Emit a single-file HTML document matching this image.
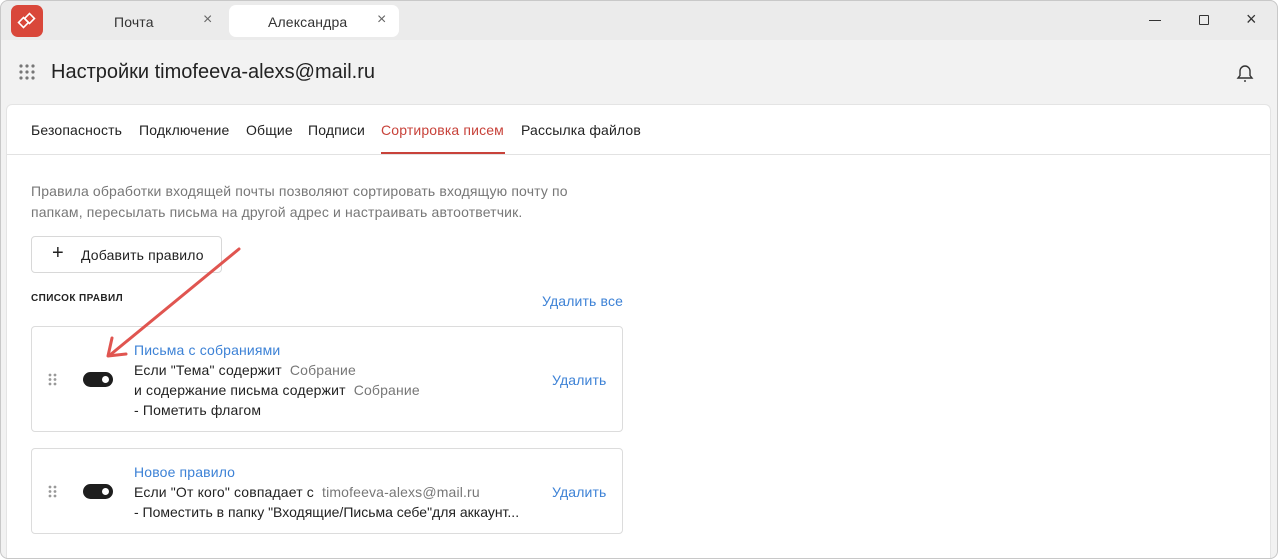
<!DOCTYPE html>
<html><head><meta charset="utf-8"><style>
*{margin:0;padding:0;box-sizing:border-box}
body{width:1278px;height:560px;background:#fff;font-family:"Liberation Sans","Noto Sans CJK SC",sans-serif;position:relative;overflow:hidden;color:#222}
.win{position:absolute;left:0;top:0;width:1278px;height:559px;border-radius:8px;background:#f2f2f2;overflow:hidden}
.frame{position:absolute;left:0;top:0;width:1278px;height:559px;border:1px solid #c8c8c8;border-radius:8px;pointer-events:none}
.tb{position:absolute;left:0;top:0;width:100%;height:40px;background:#ebebeb}
.abs{position:absolute}
.t{position:absolute;white-space:nowrap;letter-spacing:.15px}
.f{font-size:14px}
.panel{position:absolute;left:6px;top:104px;width:1265px;height:460px;background:#fff;border-radius:6px;border:1px solid #e4e4e4}
.card{position:absolute;left:31px;width:592px;border:1px solid #dcdcdc;border-radius:4px;background:#fff}
.tog{position:absolute;width:30px;height:15px;border-radius:8px;background:#1e1e1e}
.tog:after{content:"";position:absolute;right:4px;top:4px;width:7px;height:7px;border-radius:50%;background:#fff}
.blue{color:#3d82d6}
.gray{color:#777}
</style></head><body>
<div class="win">
<div class="tb"></div>
<div class="abs" style="left:11px;top:5px;width:32px;height:32px;border-radius:7px;background:#d9473a"></div>
<svg class="abs" style="left:17px;top:11px" width="20" height="20" viewBox="0 0 20 20" fill="none" stroke="#fff" stroke-width="1.6"><rect x="3" y="8" width="7" height="7" transform="rotate(-45 6.5 11.5)"/><rect x="9" y="4" width="7" height="7" transform="rotate(-45 12.5 7.5)"/></svg>
<div class="t" style="left:114px;top:14px;font-size:14px;color:#333">Почта</div>
<div class="t" style="left:203px;top:11px;font-size:16px;color:#666">×</div>
<div class="abs" style="left:229px;top:5px;width:170px;height:32px;background:#fff;border-radius:7px"></div>
<div class="t" style="left:268px;top:14px;font-size:14px;color:#333">Александра</div>
<div class="t" style="left:377px;top:11px;font-size:16px;color:#666">×</div>
<div class="abs" style="left:1149px;top:20px;width:12px;height:1px;background:#333"></div>
<div class="abs" style="left:1199px;top:15px;width:10px;height:10px;border:1px solid #333;border-radius:1px"></div>
<div class="t" style="left:1246px;top:9px;font-size:18px;color:#333">×</div>
<svg class="abs" style="left:19px;top:64px" width="17" height="17" viewBox="0 0 17 17" fill="#777"><circle cx="2" cy="2" r="1.6"/><circle cx="8" cy="2" r="1.6"/><circle cx="14" cy="2" r="1.6"/><circle cx="2" cy="8" r="1.6"/><circle cx="8" cy="8" r="1.6"/><circle cx="14" cy="8" r="1.6"/><circle cx="2" cy="14" r="1.6"/><circle cx="8" cy="14" r="1.6"/><circle cx="14" cy="14" r="1.6"/></svg>
<div class="t" style="left:51px;top:61px;font-size:20px;color:#222;letter-spacing:0">Настройки timofeeva-alexs@mail.ru</div>
<svg class="abs" style="left:1234px;top:62px" width="22" height="22" viewBox="0 0 22 22" fill="none" stroke="#333" stroke-width="1.4"><path d="M4 16h14l-2-2.5V9a5 5 0 0 0-10 0v4.5z"/><path d="M10 19h2"/></svg>
<div class="panel"></div>
<div class="t f" style="left:31px;top:122px">Безопасность</div>
<div class="t f" style="left:139px;top:122px">Подключение</div>
<div class="t f" style="left:246px;top:122px">Общие</div>
<div class="t f" style="left:308px;top:122px">Подписи</div>
<div class="t f" style="left:381px;top:122px;color:#c8423a">Сортировка писем</div>
<div class="t f" style="left:521px;top:122px">Рассылка файлов</div>
<div class="abs" style="left:7px;top:154px;width:1264px;height:1px;background:#e2e2e2"></div>
<div class="abs" style="left:381px;top:152px;width:124px;height:2px;background:#c8423a"></div>
<div class="t f" style="left:31px;top:181px;line-height:21px;color:#777">Правила обработки входящей почты позволяют сортировать входящую почту по<br>папкам, пересылать письма на другой адрес и настраивать автоответчик.</div>
<div class="abs" style="left:31px;top:236px;width:191px;height:37px;border:1px solid #d8d8d8;border-radius:4px"></div>
<div class="t" style="left:52px;top:242px;font-size:20px;color:#222">+</div>
<div class="t f" style="left:81px;top:247px">Добавить правило</div>
<div class="t" style="left:31px;top:293px;font-size:10px;font-weight:bold;letter-spacing:.4px">СПИСОК ПРАВИЛ</div>
<div class="t f blue" style="left:542px;top:293px">Удалить все</div>
<div class="card" style="top:326px;height:106px"></div>
<svg class="abs" style="left:48px;top:373px" width="9" height="13" fill="#999"><circle cx="2" cy="2" r="1.4"/><circle cx="7" cy="2" r="1.4"/><circle cx="2" cy="6.5" r="1.4"/><circle cx="7" cy="6.5" r="1.4"/><circle cx="2" cy="11" r="1.4"/><circle cx="7" cy="11" r="1.4"/></svg>
<div class="tog" style="left:83px;top:372px"></div>
<div class="t f blue" style="left:134px;top:342px">Письма с собраниями</div>
<div class="t f" style="left:134px;top:362px">Если "Тема" содержит <span class="gray">&nbsp;Собрание</span></div>
<div class="t f" style="left:134px;top:382px">и содержание письма содержит <span class="gray">&nbsp;Собрание</span></div>
<div class="t f" style="left:134px;top:402px">- Пометить флагом</div>
<div class="t f blue" style="left:552px;top:372px">Удалить</div>
<div class="card" style="top:448px;height:86px"></div>
<svg class="abs" style="left:48px;top:485px" width="9" height="13" fill="#999"><circle cx="2" cy="2" r="1.4"/><circle cx="7" cy="2" r="1.4"/><circle cx="2" cy="6.5" r="1.4"/><circle cx="7" cy="6.5" r="1.4"/><circle cx="2" cy="11" r="1.4"/><circle cx="7" cy="11" r="1.4"/></svg>
<div class="tog" style="left:83px;top:484px"></div>
<div class="t f blue" style="left:134px;top:464px">Новое правило</div>
<div class="t f" style="left:134px;top:484px">Если "От кого" совпадает с <span class="gray">&nbsp;timofeeva-alexs@mail.ru</span></div>
<div class="t f" style="left:134px;top:504px;letter-spacing:0">- Поместить в папку "Входящие/Письма себе"для аккаунт...</div>
<div class="t f blue" style="left:552px;top:484px">Удалить</div>
<svg class="abs" style="left:0;top:0" width="1278" height="560" fill="none" stroke="#e05550" stroke-width="3" stroke-linecap="round"><path d="M239 249L110 355"/><path d="M108 356l4-18M108 356l18-2"/></svg>
</div>
<div class="frame"></div>
</body></html>
